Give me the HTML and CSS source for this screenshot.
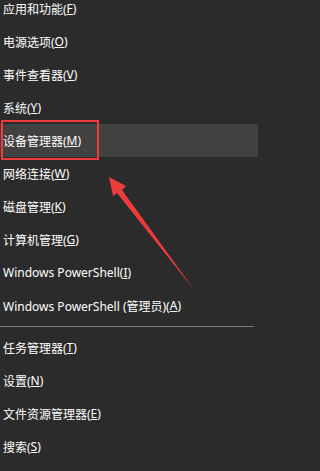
FILE: index.html
```html
<!DOCTYPE html>
<html lang="zh-CN">
<head>
<meta charset="utf-8">
<link rel="stylesheet" href="styles.css">
</head>
<body>
<ul class="menu">
  <li class="item">应用和功能(<u>F</u>)</li>
  <li class="item">电源选项(<u>O</u>)</li>
  <li class="item">事件查看器(<u>V</u>)</li>
  <li class="item">系统(<u>Y</u>)</li>
  <li class="item active">设备管理器(<u>M</u>)<span class="callout"></span></li>
  <li class="item">网络连接(<u>W</u>)</li>
  <li class="item">磁盘管理(<u>K</u>)</li>
  <li class="item">计算机管理(<u>G</u>)</li>
  <li class="item">Windows PowerShell(<u>I</u>)</li>
  <li class="item">Windows PowerShell (管理员)(<u>A</u>)</li>
  <li class="sep"></li>
  <li class="item">任务管理器(<u>T</u>)</li>
  <li class="item">设置(<u>N</u>)</li>
  <li class="item">文件资源管理器(<u>E</u>)</li>
  <li class="item">搜索(<u>S</u>)</li>
</ul>
<svg class="arrow" width="258" height="471" viewBox="0 0 258 471">
  <polygon points="109,177 126,186 122,190 195,291 117,193 113,196" fill="#ee3b3b"/>
</svg>
</body>
</html>
```
FILE: styles.css
```css
html, body {
  margin: 0;
  padding: 0;
  background: #2b2b2b;
}
body {
  width: 258px;
  height: 471px;
  overflow: hidden;
  position: relative;
  font-family: "Noto Sans", "Noto Sans CJK SC", sans-serif;
  font-size: 12px;
  color: #ffffff;
}
.menu {
  list-style: none;
  margin: -8px 0 0 0;
  padding: 0;
}
.item {
  height: 33px;
  display: flex;
  align-items: center;
  padding-left: 3px;
  white-space: nowrap;
  position: relative;
}
.item u {
  text-decoration: underline;
  text-underline-offset: 1px;
}
.item.active {
  background: #414141;
}
.callout {
  position: absolute;
  left: 1px;
  top: -4px;
  width: 98px;
  height: 40px;
  box-sizing: border-box;
  border: 2.5px solid #ee3b3b;
}
.sep {
  height: 1px;
  margin: 4px 4px 4px 0;
  background: #7a7a7a;
}
.arrow {
  position: absolute;
  left: 0;
  top: 0;
  pointer-events: none;
}
```
